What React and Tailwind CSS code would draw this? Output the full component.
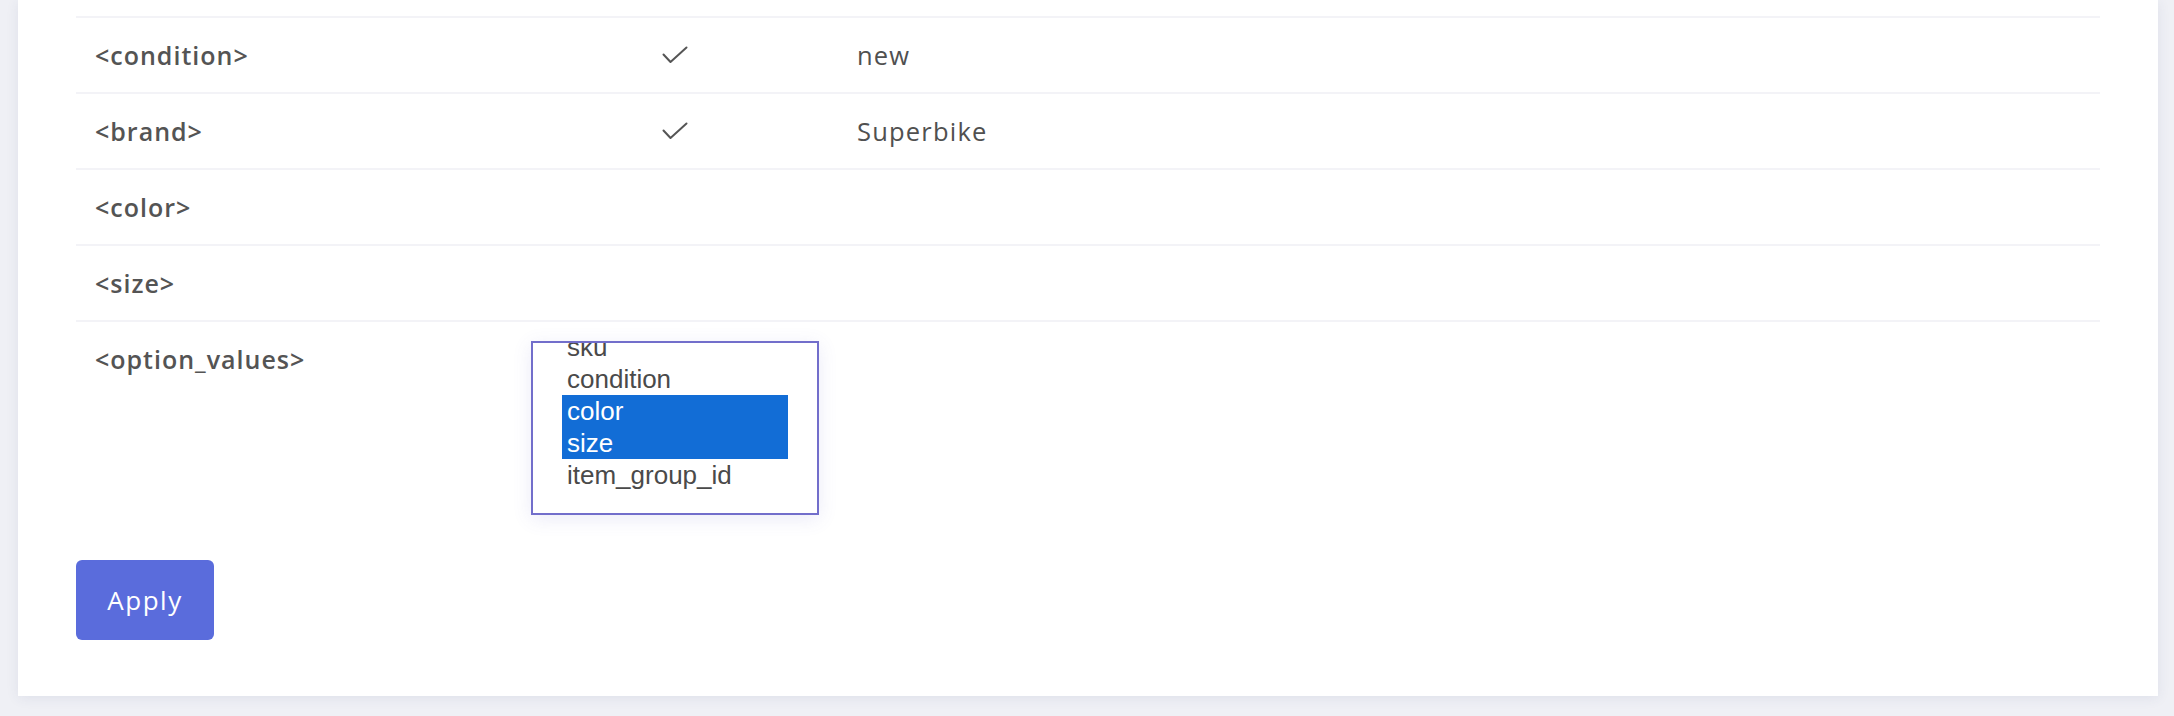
import React from "react";

const font = { fontFamily: '"Open Sans", "DejaVu Sans", sans-serif' };

function Check() {
  return (
    <svg width="26" height="18" viewBox="0 0 26 18" fill="none" className="block">
      <polyline points="1.5,8.5 8.5,16 24.5,1.5" stroke="#555" strokeWidth="2" strokeLinecap="round" strokeLinejoin="round" />
    </svg>
  );
}

const rows = [
  { label: "<condition>", check: true, value: "new" },
  { label: "<brand>", check: true, value: "Superbike" },
  { label: "<color>" },
  { label: "<size>" },
];

const options = [
  { t: "sku" },
  { t: "condition" },
  { t: "color", s: true },
  { t: "size", s: true },
  { t: "item_group_id" },
];

export default function App() {
  return (
    <div className="min-h-[716px] bg-[#eff0f5] pl-[18px] pr-[16px] pb-[20px]" style={font}>
      <div className="h-[696px] bg-white px-[58px] pt-[16px] shadow-[0_2px_12px_rgba(60,70,120,0.09)]">
        {rows.map((r) => (
          <div
            key={r.label}
            className="grid h-[76px] grid-cols-[436px_326px_1fr] items-center border-t-2 border-[#f3f3f7]"
          >
            <div className="px-[19px] text-[25px] font-semibold leading-[36px] tracking-[1px] text-[#545454]">
              {r.label}
            </div>
            <div className="flex justify-center px-[19px]">{r.check ? <Check /> : null}</div>
            <div className="px-[19px] text-[25.5px] font-normal leading-[36px] tracking-[1.2px] text-[#505050]">
              {r.value || ""}
            </div>
          </div>
        ))}
        <div className="grid grid-cols-[436px_326px_1fr] items-start border-t-2 border-[#f3f3f7] pt-[19px] pb-[20px]">
          <div className="px-[19px] text-[25px] font-semibold leading-[36px] tracking-[1px] text-[#545454]">
            {"<option_values>"}
          </div>
          <div className="px-[19px]">
            <div className="h-[174px] w-[288px] overflow-hidden border-2 border-[#726ecb] bg-white shadow-[0_4px_18px_rgba(90,90,200,0.12)]">
              <div
                className="mt-[-12px] px-[29px] text-[26px] leading-[32px] text-[#4a4a4a]"
                style={{ fontFamily: '"Liberation Sans", Arial, sans-serif' }}
              >
                {options.map((o) => (
                  <div
                    key={o.t}
                    className={
                      o.s
                        ? "h-[32px] bg-[#126dd6] px-[5px] text-white"
                        : "h-[32px] px-[5px]"
                    }
                  >
                    {o.t}
                  </div>
                ))}
              </div>
            </div>
          </div>
          <div />
        </div>
        <button className="mt-[25px] flex h-[80px] w-[138px] items-center justify-center rounded-[6px] bg-[#5a6cdc] text-[26px] font-normal tracking-[1.5px] text-white">
          Apply
        </button>
      </div>
    </div>
  );
}
